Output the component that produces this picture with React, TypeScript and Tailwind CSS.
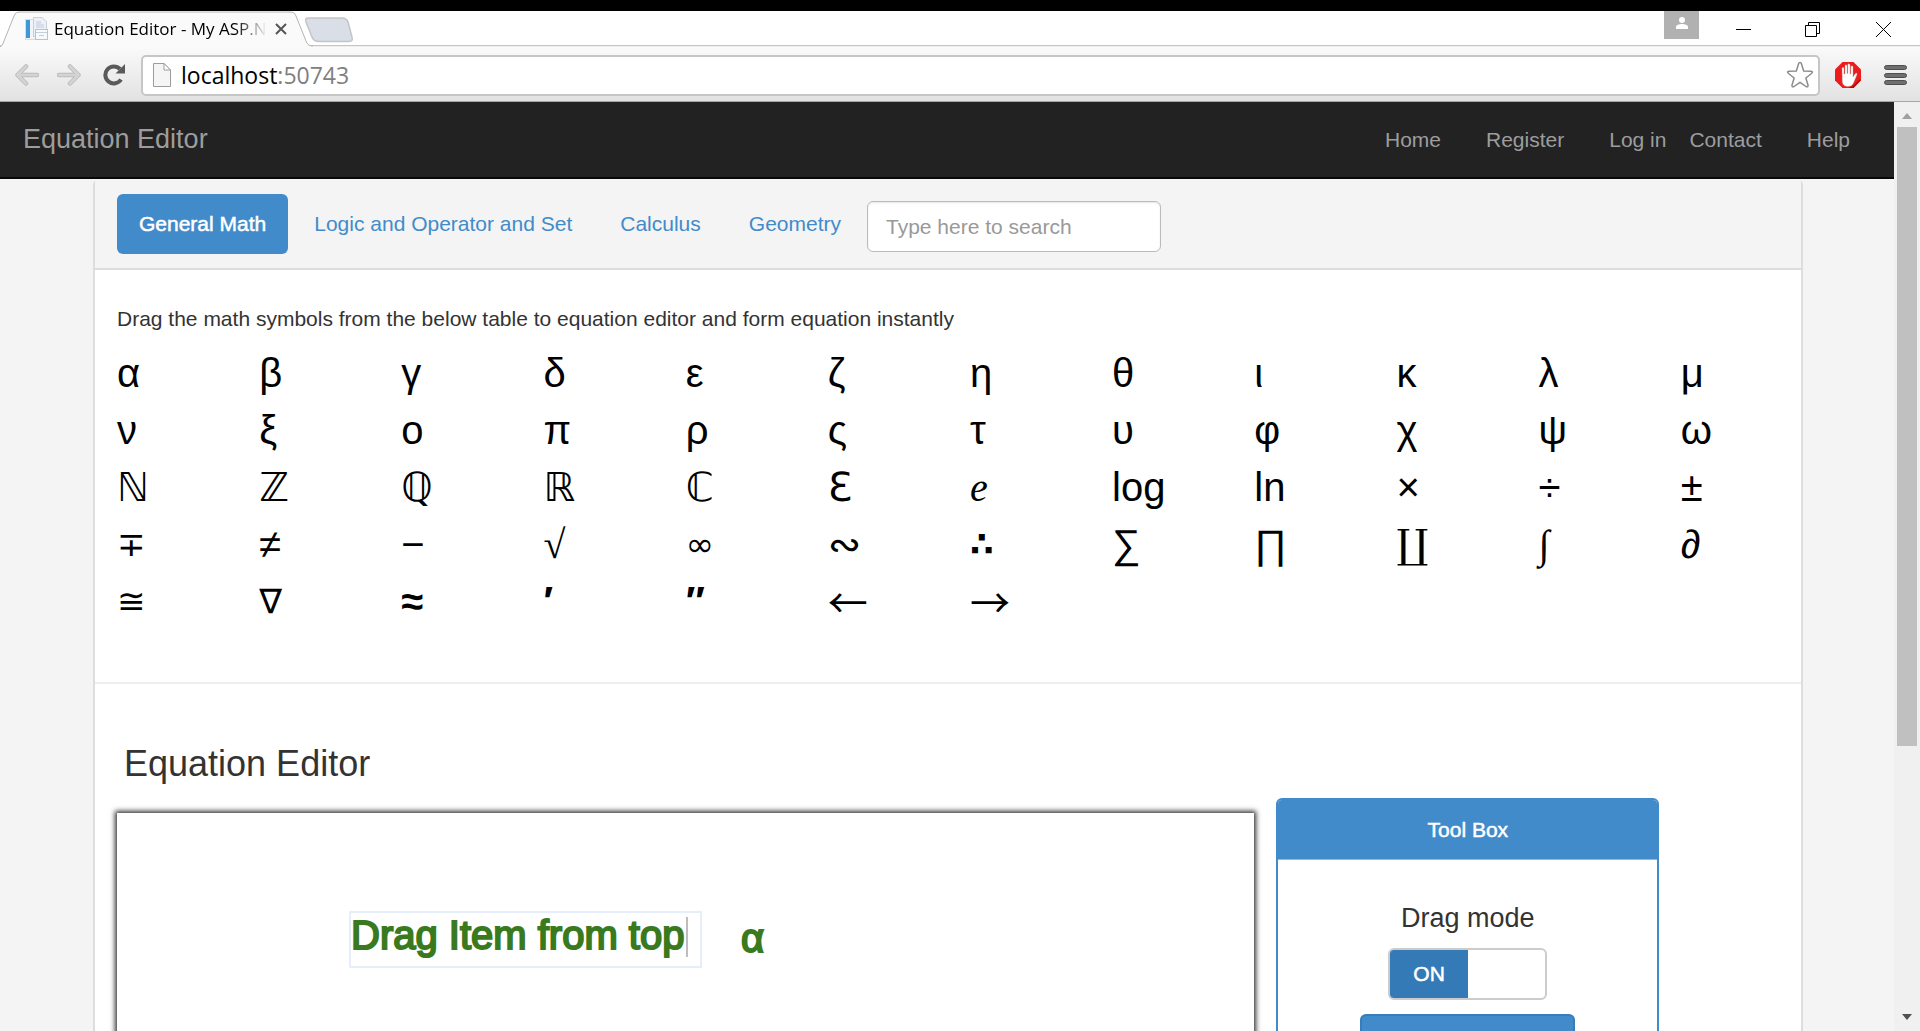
import React from "react";

const SANS = "font-['Liberation_Sans',Arial,sans-serif]";
const SEGOE = "font-['Open_Sans','Noto_Sans',sans-serif]";

type Sym = { ch: string; font?: string };

const greek = (s: string): Sym[] => s.split(" ").map((ch) => ({ ch }));
const math = "font-['DejaVu_Sans',sans-serif]";
const serif = "font-['DejaVu_Serif','DejaVu_Sans',serif]";
const small = "font-['DejaVu_Sans',sans-serif] text-[34px]";
const arrow = "font-['Noto_Sans_CJK_JP',sans-serif]";

const rows: Sym[][] = [
  greek("α β γ δ ε ζ η θ ι κ λ μ"),
  greek("ν ξ ο π ρ ς τ υ φ χ ψ ω"),
  [
    { ch: "ℕ", font: math },
    { ch: "ℤ", font: math },
    { ch: "ℚ", font: math },
    { ch: "ℝ", font: math },
    { ch: "ℂ", font: math },
    { ch: "ℇ", font: serif },
    { ch: "e", font: "font-['Liberation_Serif',serif] italic" },
    { ch: "log" },
    { ch: "ln" },
    { ch: "×" },
    { ch: "÷" },
    { ch: "±" },
  ],
  [
    { ch: "∓", font: small },
    { ch: "≠" },
    { ch: "−" },
    { ch: "√", font: "font-['Liberation_Serif',serif]" },
    { ch: "∞", font: small },
    { ch: "∾", font: math },
    { ch: "∴", font: "font-['DejaVu_Sans',sans-serif] text-[34px] font-bold" },
    { ch: "∑" },
    { ch: "∏" },
    { ch: "∐", font: serif },
    { ch: "∫", font: "font-['Liberation_Serif',serif]" },
    { ch: "∂" },
  ],
  [
    { ch: "≅", font: small },
    { ch: "∇", font: small },
    { ch: "≈", font: "font-bold" },
    { ch: "′", font: "font-bold" },
    { ch: "″", font: "font-bold" },
    { ch: "←", font: arrow },
    { ch: "→", font: arrow },
  ],
];

function TabStrip() {
  return (
    <div className="relative flex h-9 shrink-0 items-start bg-white">
      <div className="absolute inset-x-0 bottom-0 h-0.5 border-t border-[#c4c4c4] bg-[#efefef]" />
      <div className="relative flex h-9 w-[312px] items-center pl-6">
        <svg className="absolute inset-0" width="314" height="36" viewBox="0 0 314 36" fill="none">
          <path d="M0 36C2 35 3 33 4 30L14 5C15 2 17 1 20 1H290C293 1 295 2 296 5L306 30C307 33 309 35 312 36Z" fill="#fafafa" />
          <path d="M0 36C2 35 3 33 4 30L14 5C15 2 17 1 20 1H290C293 1 295 2 296 5L306 30C307 33 309 35 313 35" stroke="#b4b4b4" />
        </svg>
        <svg className="relative shrink-0" width="24" height="24" viewBox="0 0 24 24">
          <rect x="1.5" y="2.5" width="17" height="20" fill="#f1f5f9" stroke="#d5dde6" />
          <rect x="2" y="3" width="4" height="18" fill="#3f97d3" />
          <path d="M9.5.5H18L22.5 4.5V19.5H9.5Z" fill="#edf1f6" stroke="#c5cfda" />
          <path d="M12 4H17V7H20V11H12Z" fill="#d5deea" />
          <rect x="11.5" y="12.5" width="12" height="10" fill="#f7f9fb" stroke="#b9c3cf" />
          <path d="M12 15.5H23M15 18.5H20" stroke="#c5cfda" />
        </svg>
        <span className={`relative ml-1.5 bg-linear-to-r from-black from-85% to-transparent bg-clip-text text-[17px] whitespace-nowrap text-transparent ${SEGOE}`}>
          Equation Editor - My ASP.N
        </span>
        <button aria-label="Close tab" className="relative mr-[25px] ml-auto">
          <svg width="12" height="12" viewBox="0 0 12 12" stroke="#555" strokeWidth="2">
            <path d="M1 1L11 11M11 1L1 11" />
          </svg>
        </button>
      </div>
      <button aria-label="New tab" className="relative -ml-2 mt-[6px]">
        <svg width="50" height="26" viewBox="0 0 50 26">
          <path d="M4 1H38C41 1 43 2 44 5L48 20C49 23 48 24.5 45 24.5H15C11 24.5 9 23 8 20L2 5C1 2 2 1 4 1Z" fill="#d9dee7" stroke="#c3c5c9" strokeWidth="1.5" />
        </svg>
      </button>
      <div className="relative ml-auto flex items-start">
        <button aria-label="Profile" className="mr-[37px] flex h-7 w-[35px] items-start justify-center bg-[#b1b1b1] pt-[6px]">
          <svg width="12" height="12" viewBox="0 0 12 12" fill="#fff">
            <circle cx="6" cy="3" r="3" />
            <path d="M0 12V10C0 8 3 7 6 7S12 8 12 10V12Z" />
          </svg>
        </button>
        <button aria-label="Minimize" className="mt-[18px] mr-[54px]">
          <svg width="15" height="1" viewBox="0 0 15 1"><rect width="15" height="1" /></svg>
        </button>
        <button aria-label="Restore" className="mt-[11px] mr-14">
          <svg width="15" height="15" viewBox="0 0 15 15" fill="none" stroke="#000">
            <path d="M.5 3.5H11.5V14.5H.5ZM3.5 3V.5H14.5V11.5H12" />
          </svg>
        </button>
        <button aria-label="Close" className="mt-[11px] mr-[29px]">
          <svg width="15" height="15" viewBox="0 0 15 15" stroke="#000"><path d="M0 0L15 15M15 0L0 15" /></svg>
        </button>
      </div>
    </div>
  );
}

function Arrow({ flip }: { flip?: boolean }) {
  return (
    <svg className={flip ? "rotate-180" : ""} width="24" height="22" viewBox="0 0 24 22" fill="none" strokeLinecap="round" strokeLinejoin="round">
      <path d="M11 2.5L2.5 11L11 19.5M3 11H22" stroke="#bdbdbd" strokeWidth="4.5" />
      <path d="M11 2.5L2.5 11L11 19.5M3 11H22" stroke="#d4d4d4" strokeWidth="2.5" />
    </svg>
  );
}

function Toolbar() {
  return (
    <div className="flex h-[55px] shrink-0 items-center border-b border-[#a6a6a6] bg-linear-to-b from-[#fafafa] to-[#e2e2e2] pt-0.5 pl-[15px]">
      <button aria-label="Back"><Arrow /></button>
      <button aria-label="Forward" className="ml-[18px]"><Arrow flip /></button>
      <button aria-label="Reload" className="ml-[22px]">
        <svg width="24" height="22" viewBox="0 0 24 22">
          <path d="M18 15.5A8.5 8.5 0 1 1 17 5" fill="none" stroke="#5a5a5a" strokeWidth="4" />
          <path d="M22 0V9.5H12.5Z" fill="#5a5a5a" />
        </svg>
      </button>
      <label className="ml-3.5 flex h-[41px] flex-1 items-center rounded-[5px] border-2 border-[#c6c6c6] bg-white pr-1 pl-[10px]">
        <svg className="shrink-0" width="18" height="24" viewBox="0 0 18 24" fill="#f5f5f5" stroke="#9c9c9c">
          <path d="M.5.5H11L17.5 7V23.5H.5Z" />
          <path d="M11 .5V7H17.5Z" fill="#fff" />
        </svg>
        <span className={`relative ml-[10px] flex-1 text-[23px] leading-9 ${SEGOE}`}>
          <span className="text-black">localhost</span>
          <span className="text-[#808080]">:50743</span>
          <input aria-label="Address" className="absolute inset-0 w-full bg-transparent outline-none" />
        </span>
        <svg width="28" height="28" viewBox="0 0 28 28" fill="#fff" stroke="#8c8c8c" strokeWidth="1.5" strokeLinejoin="round">
          <path d="M14 1.5Q15 1.5 15.5 3L17.7 10L25 10.2Q27.5 10.7 25.5 12.5L19.8 17L22 24Q22.3 26.5 20 25.5L14 21.3L8 25.5Q5.7 26.5 6 24L8.2 17L2.5 12.5Q.5 10.7 3 10.2L10.3 10L12.5 3Q13 1.5 14 1.5Z" />
        </svg>
      </label>
      <button aria-label="Ad blocker" className="ml-[15px]">
        <svg width="26" height="26" viewBox="0 0 26 26">
          <path d="M7.5 0H18.5L26 7.5V18.5L18.5 26H7.5L0 18.5V7.5Z" fill="#ed1c1c" />
          <path d="M18 24L25 17V19L18.5 26H13Z" fill="#a80d0d" />
          <path d="M7 6Q8 4.5 9 6V12H10V3.5Q11 2 12 3.5V11.5H12.8V2.5Q13.8 1 15 2.5V12H15.8V4.5Q17 3 18 4.5V15L20 12Q22 10 22 12.5L18.5 21Q17 24.5 13 24.5Q8 24.5 7.3 20Z" fill="#fff" stroke="#b9a0a0" strokeWidth=".4" />
        </svg>
      </button>
      <button aria-label="Menu" className="mr-3 ml-[23px]">
        <svg width="24" height="22" viewBox="0 0 24 22" fill="#6f6f6f" stroke="#4e4e4e">
          <rect x=".5" y="1.5" width="22" height="4" rx="2" />
          <rect x=".5" y="9.5" width="22" height="4" rx="2" />
          <rect x=".5" y="16.5" width="22" height="4" rx="2" />
        </svg>
      </button>
    </div>
  );
}

function Navbar() {
  return (
    <nav className="flex h-[77px] items-center border-b-2 border-[#080808] bg-[#222] pr-11 pl-[23px] text-[#9d9d9d]">
      <a href="#" className="text-[27px]">Equation Editor</a>
      <div className="ml-auto flex gap-[45px] text-[21px]">
        <a href="#home">Home</a>
        <a href="#register">Register</a>
        <div className="flex gap-[23px]">
          <a href="#login">Log in</a>
          <a href="#contact">Contact</a>
        </div>
        <a href="#help">Help</a>
      </div>
    </nav>
  );
}

function SymbolTabs() {
  return (
    <div className="flex items-start border-b-2 border-[#ddd] bg-[#f4f4f4] px-[22px] pt-[15px] pb-[14px] text-[21px] leading-[30px] text-[#428bca]">
      <div className="flex gap-1">
        <a href="#general" className="rounded-md bg-[#428bca] px-[22px] py-[15px] text-white [-webkit-text-stroke:0.5px_white]">General Math</a>
        <a href="#logic" className="px-[22px] py-[15px]">Logic and Operator and Set</a>
        <a href="#calculus" className="px-[22px] py-[15px]">Calculus</a>
        <a href="#geometry" className="px-[22px] py-[15px]">Geometry</a>
      </div>
      <input
        aria-label="Search"
        placeholder="Type here to search"
        className="mt-[7px] ml-1 h-[51px] w-[294px] rounded-md border border-[#bbb] bg-white px-[18px] shadow-[inset_0_1px_2px_rgba(0,0,0,0.1)] placeholder:text-[#999]"
      />
    </div>
  );
}

function SymbolTable() {
  return (
    <div className="border-b-2 border-[#eee] pt-[34px] pb-[52px]">
      <p className="mb-[11px] pl-[22px] text-[21px] leading-[30px] text-[#333]">
        Drag the math symbols from the below table to equation editor and form equation instantly
      </p>
      <table className="w-full table-fixed text-[40px] leading-[57px] text-black">
        <tbody>
          {rows.map((row, r) => (
            <tr key={r} className="h-[57px]">
              {row.map((s) => (
                <td key={s.ch} className="h-[57px] p-0 pl-[22px]">
                  <div draggable className={`h-[57px] leading-[57px] ${s.font ?? ""}`}>{s.ch}</div>
                </td>
              ))}
            </tr>
          ))}
        </tbody>
      </table>
    </div>
  );
}

function Editor() {
  return (
    <section className="pt-[57px]">
      <h2 className="pl-[29px] text-4xl leading-[46px] text-[#333]">Equation Editor</h2>
      <div className="flex items-start gap-[22px]">
        <div className="relative mt-[26px] ml-[22px] h-[600px] w-2/3 bg-white shadow-[0_0_5px_2px_#333]">
          <div className="absolute top-[98px] left-[232px] flex h-[57px] w-[353px] border-2 border-[#e6edfb] text-[40px] leading-[45px] text-[#3a7a1f] [-webkit-text-stroke:2px_#3a7a1f]">
            <span className="whitespace-nowrap">Drag Item from top</span>
            <i className="mt-1 ml-0.5 h-10 w-0.5 bg-[#bdbdbd]" />
          </div>
          <span className="absolute top-[103px] left-[624px] text-[40px] leading-[45px] text-[#3a7a1f] [-webkit-text-stroke:2px_#3a7a1f]">α</span>
        </div>
        <aside className="mt-[11px] w-[383px] overflow-hidden rounded-md border-2 border-[#428bca] bg-white text-center">
          <h3 className="h-[59px] bg-[#428bca] text-[21px] leading-[60px] text-white [-webkit-text-stroke:0.5px_white]">Tool Box</h3>
          <div className="flex h-[500px] flex-col items-center border-t border-[#8fbce4] pt-[43px]">
            <label htmlFor="drag" className="text-[27px] leading-[30px] text-[#333]">Drag mode</label>
            <div className="relative mt-[15px] flex h-[52px] w-[159px] overflow-hidden rounded-md border-2 border-[#ccc] bg-white">
              <input id="drag" type="checkbox" role="switch" defaultChecked className="absolute inset-0 opacity-0" />
              <span className="w-1/2 bg-[#337ab7] text-[21px] leading-[48px] text-white [-webkit-text-stroke:0.5px_white]">ON</span>
            </div>
            <button aria-label="Tool action" className="mt-[14px] h-[51px] w-[215px] rounded-md border-2 border-[#357ebd] bg-[#428bca]" />
          </div>
        </aside>
      </div>
    </section>
  );
}

function Scrollbar() {
  return (
    <div className="flex w-[26px] shrink-0 flex-col items-center bg-[#f0f0f0]">
      <svg className="mt-[11px] shrink-0" width="10" height="6" viewBox="0 0 10 6"><path d="M5 0L10 6H0Z" fill="#a0a0a0" /></svg>
      <div className="mt-2 h-2/3 w-5 bg-[#c0c0c0]" />
      <svg className="mt-auto mb-[11px] shrink-0" width="10" height="6" viewBox="0 0 10 6"><path d="M0 0H10L5 6Z" fill="#505050" /></svg>
    </div>
  );
}

export default function App() {
  return (
    <div className={`flex h-screen flex-col overflow-hidden border-t-[11px] border-black bg-white ${SANS}`}>
      <TabStrip />
      <Toolbar />
      <div className="flex min-h-0 flex-1">
        <div className="min-w-0 flex-1 overflow-hidden bg-[#f4f4f4]">
          <Navbar />
          <main className="mr-[91px] ml-[93px] rounded-t-md border-2 border-t-0 border-[#ddd] bg-white">
            <SymbolTabs />
            <SymbolTable />
            <Editor />
          </main>
        </div>
        <Scrollbar />
      </div>
    </div>
  );
}
